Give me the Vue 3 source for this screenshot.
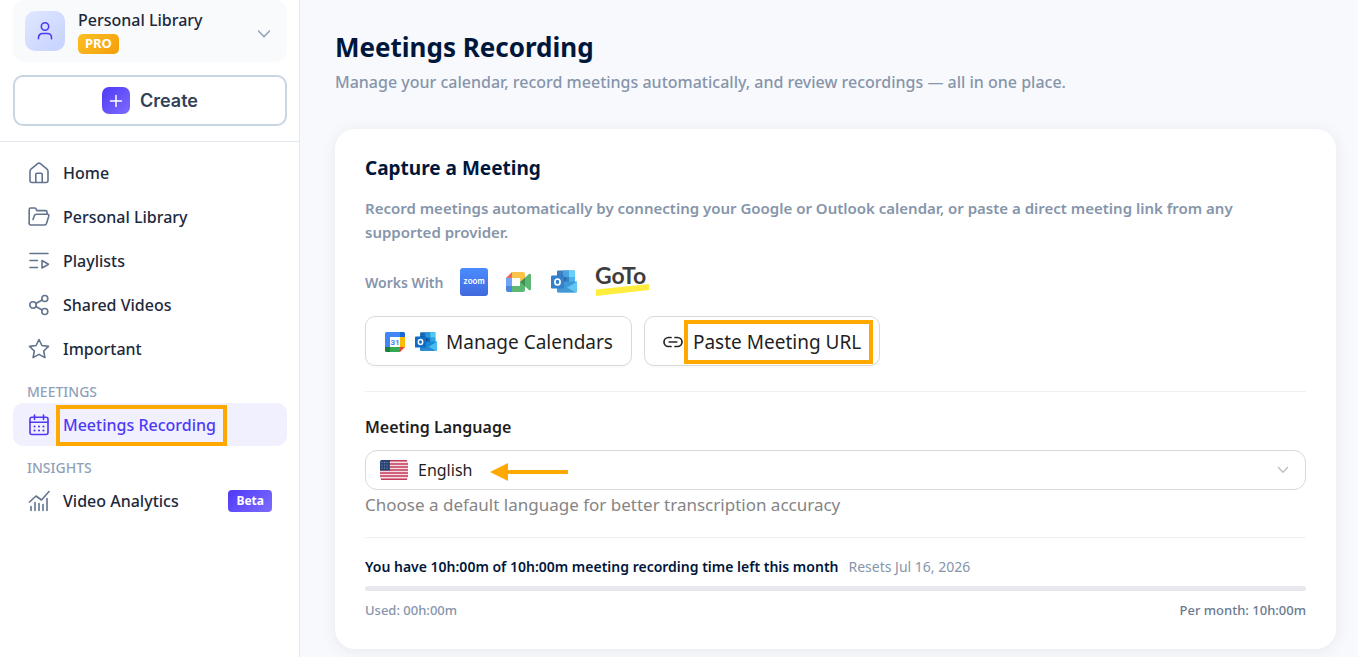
<script setup>
import { ref } from 'vue'

const mainLinks = [
  { label: 'Home', icon: 'home' },
  { label: 'Personal Library', icon: 'folder' },
  { label: 'Playlists', icon: 'playlist' },
  { label: 'Shared Videos', icon: 'share' },
  { label: 'Important', icon: 'star' },
]
const language = ref('English')
const used = ref(0)
</script>

<template>
  <div class="layout">
    <svg class="defs" aria-hidden="true">
      <symbol id="outlook" viewBox="0 0 28 26">
        <path d="M8 1.500h16q1 0 1 1V14H7V2.500q0-1 1-1z" fill="#1769b8" />
        <path d="M7 6h9v6H7z" fill="#0b5296" />
        <path d="M13 1.500h6V8h-6z" fill="#2a94df" />
        <path d="M19 1.500h5q1 0 1 1V8h-6z" fill="#50caf5" />
        <path d="M19 8h6v6h-6z" fill="#2aa4e8" />
        <path d="M7 13l20-.500V22q0 1.500-1.500 1.500H8.500Q7 23.500 7 22z" fill="#1a87d4" />
        <path d="M27 12.500V22q0 1.500-1.500 1.500H9l18-11z" fill="#45bdf0" />
        <path d="M7 13l18.500 10.300H8.500Q7 23.300 7 22z" fill="#2587cf" />
        <rect x="1" y="6.500" width="13" height="13" rx="1" fill="#0f6cc4" />
        <ellipse cx="7.500" cy="13" rx="2.600" ry="3" fill="none" stroke="#fff" stroke-width="1.700" />
      </symbol>
    </svg>

    <aside class="sidebar">
      <div class="top">
        <button class="profile" type="button">
          <span class="avatar">
            <svg width="20" height="20" viewBox="0 0 20 20" fill="none" stroke="#4f39f6" stroke-width="1.600" stroke-linecap="round" stroke-linejoin="round">
              <circle cx="10" cy="5.500" r="3.700" />
              <path d="M3.500 17.700v-1.200a4 4 0 0 1 4-4h5a4 4 0 0 1 4 4v1.200" />
            </svg>
          </span>
          <span class="who">
            <span class="name">Personal Library</span>
            <span class="pro">PRO</span>
          </span>
          <svg class="expand" width="14" height="10" viewBox="0 0 14 10" fill="none" stroke="#90a1b9" stroke-width="1.500" stroke-linecap="round" stroke-linejoin="round">
            <path d="M1.500 2L7 7.700 12.500 2" />
          </svg>
        </button>
        <button class="create" type="button">
          <span class="plus">
            <svg width="14" height="14" viewBox="0 0 14 14" stroke="#fff" stroke-width="1.500" stroke-linecap="round">
              <path d="M7 1.500v11M1.500 7h11" />
            </svg>
          </span>
          Create
        </button>
      </div>

      <nav class="nav">
        <a v-for="link in mainLinks" :key="link.label" href="#" class="item">
          <svg class="icon" viewBox="0 0 22 22">
            <g v-if="link.icon === 'home'">
              <path d="M2 9.300Q2 8 3 7.200L9.600 1.700q1.400-1.100 2.800 0L19 7.200q1 .8 1 2.100V18.500a2 2 0 0 1-2 2H4a2 2 0 0 1-2-2z" />
              <path d="M7.800 20.300v-8q0-1 1-1h4.400q1 0 1 1v8" />
            </g>
            <g v-else-if="link.icon === 'folder'">
              <path d="M1.200 17.500V3.500q0-1.500 1.500-1.500h4q.8 0 1.200.7l1 1.900h8.600q1.500 0 1.500 1.500v1.900" />
              <path d="M1.200 17.500q0 1.500 1.500 1.500h14q1.300 0 1.700-1.200l2.300-7.400q.6-2.100-1.400-2.200H8.500q-1.500 0-2.100 1.400L5 13.500" />
            </g>
            <g v-else-if="link.icon === 'playlist'">
              <path d="M2 3.500h18M2 10.500h7.500M2 17.500h7.500M14 10.500v7.500l6.500-3.700z" />
            </g>
            <g v-else-if="link.icon === 'share'">
              <circle cx="16.800" cy="4.500" r="3" />
              <circle cx="5" cy="11" r="3.200" />
              <circle cx="16.800" cy="17.500" r="3" />
              <path d="M7.900 9.500l6.200-3.500M7.900 12.500l6.200 3.500" />
            </g>
            <path v-else d="M11 1.500l2.900 6 6.600.9-4.800 4.600 1.200 6.600L11 16.400l-5.900 3.200L6.300 13 1.500 8.400l6.600-.9z" />
          </svg>
          {{ link.label }}
        </a>

        <h2 class="group">MEETINGS</h2>
        <a href="#" class="item active" aria-current="page">
          <svg class="icon" viewBox="0 0 22 22">
            <rect x="2" y="3.200" width="18" height="17.300" rx="2" />
            <path d="M6.500 1v4.500M15.500 1v4.500M2 8.300h18" />
            <path d="M6.500 12.500h.1M10.950 12.500h.1M15.400 12.500h.1M6.500 16.500h.1M10.950 16.500h.1M15.400 16.500h.1" stroke-width="2" />
          </svg>
          <span class="mark">Meetings Recording</span>
        </a>

        <h2 class="group">INSIGHTS</h2>
        <a href="#" class="item">
          <svg class="icon" viewBox="0 0 22 22">
            <path d="M1.500 12L8 6l5.500 4L21 1.500M3 20.500v-4M7 20.500v-8M11 20.500v-7M15 20.500v-6M19 20.500v-12" />
          </svg>
          Video Analytics
          <span class="beta">Beta</span>
        </a>
      </nav>
    </aside>

    <main class="main">
      <h1>Meetings Recording</h1>
      <p class="lead">Manage your calendar, record meetings automatically, and review recordings — all in one place.</p>

      <section class="card">
        <h2>Capture a Meeting</h2>
        <p class="about">Record meetings automatically by connecting your Google or Outlook calendar, or paste a direct meeting link from any supported provider.</p>

        <div class="works">
          <span>Works With</span>
          <svg width="28" height="28" viewBox="0 0 28 28" role="img" aria-label="Zoom">
            <defs>
              <linearGradient id="zoomFill" x2="0" y2="1">
                <stop stop-color="#4a8cff" />
                <stop offset="1" stop-color="#4169de" />
              </linearGradient>
            </defs>
            <rect width="28" height="28" rx="3" fill="url(#zoomFill)" />
            <text x="14" y="16" text-anchor="middle" class="zoom-word">zoom</text>
          </svg>
          <svg class="soft" width="28" height="28" viewBox="0 0 28 28" role="img" aria-label="Google Meet">
            <path d="M1 10l6-6v6z" fill="#ea4d42" />
            <path d="M7 4h11q2 0 2 2v5l-5 3v-4H7z" fill="#fbb92a" />
            <path d="M1 10h6v8H1z" fill="#5a93f3" />
            <path d="M1 18h6v6H3q-2 0-2-2z" fill="#2f72da" />
            <path d="M7 18h8v-4l5 3v5q0 2-2 2H7z" fill="#3fab5a" />
            <path d="M15 14l9-8q2-1 2 1v14q0 2-2 1z" fill="#3fab5a" />
            <path d="M15 14l5-4v8z" fill="#1d7d3a" />
          </svg>
          <svg class="soft" width="28" height="26" role="img" aria-label="Outlook"><use href="#outlook" /></svg>
          <svg width="56" height="40" viewBox="0 -4 56 40" role="img" aria-label="GoTo">
            <path d="M1 23.500L54 18v6L1 30z" fill="#ffed3d" />
            <text x="0" y="18" class="goto-word">GoTo</text>
          </svg>
        </div>

        <div class="actions">
          <button class="calendars" type="button">
            <svg width="22" height="22" viewBox="0 0 22 22" aria-hidden="true">
              <path d="M2.500 1H16v5H6v10H1V2.500Q1 1 2.500 1z" fill="#4285f4" />
              <path d="M16 1h3.500Q21 1 21 2.500V6h-5z" fill="#1967d2" />
              <path d="M16 6h5v10h-5z" fill="#fbbc04" />
              <path d="M6 16h10v5H6z" fill="#34a853" />
              <path d="M1 16h5v5H2.500Q1 21 1 19.500z" fill="#188038" />
              <path d="M16 16h5l-5 5z" fill="#ea4335" />
              <path d="M6 6h10v10H6z" fill="#fff" />
              <text x="11" y="14" text-anchor="middle" class="day">31</text>
            </svg>
            <svg width="24" height="22" aria-hidden="true"><use href="#outlook" /></svg>
            <span>Manage Calendars</span>
          </button>
          <button type="button">
            <svg width="20" height="12" viewBox="0 0 20 12" fill="none" stroke="#262626" stroke-width="1.700" stroke-linecap="round">
              <path d="M8 1.500H5.500a4.500 4.500 0 0 0 0 9H8M12 1.500h2.500a4.500 4.500 0 0 1 0 9H12M6.300 6h7.400" />
            </svg>
            <span class="mark wide">Paste Meeting URL</span>
          </button>
        </div>

        <div class="language">
          <label for="language">Meeting Language</label>
          <div class="field">
            <svg width="28" height="20" viewBox="0 0 28 20" aria-hidden="true">
              <rect width="28" height="20" rx="2" fill="#f3dfe3" />
              <path d="M1 .8h26M0 4h28M0 7h28M0 10h28M0 13h28M0 16h28M1 19.200h26" stroke="#c63a59" stroke-width="1.600" />
              <path d="M2 0h8v10.500H0V2q0-2 2-2z" fill="#274472" />
              <path d="M1.500 2.500h8M1.500 5.200h8M1.500 8h8" stroke="#8296b8" stroke-width="1" stroke-dasharray="1 1.500" />
            </svg>
            <select id="language" v-model="language">
              <option>English</option>
            </select>
            <svg width="12" height="8" viewBox="0 0 12 8" fill="none" stroke="#bfbfbf" stroke-width="1.400">
              <path d="M1 1l5 5.200L11 1" />
            </svg>
            <svg class="arrow" width="80" height="20" viewBox="0 0 80 20" aria-hidden="true">
              <path d="M1 10L19 1v7h60v4H19v7z" fill="#ffa800" />
            </svg>
          </div>
          <p>Choose a default language for better transcription accuracy</p>
        </div>

        <div class="usage">
          <p class="left"><strong>You have 10h:00m of 10h:00m meeting recording time left this month</strong><span>Resets Jul 16, 2026</span></p>
          <div class="track"><div class="fill" :style="{ width: used + '%' }"></div></div>
          <div class="totals"><span>Used: 00h:00m</span><span class="month">Per month: 10h:00m</span></div>
        </div>
      </section>
    </main>
  </div>
</template>

<style>
body {
  background: #f8f9fd;
}
</style>

<style scoped>
.layout {
  display: flex;
  min-height: 100vh;
  font-family: "Noto Sans", "Open Sans", sans-serif;
  color: #1d293d;
  overflow: hidden;
}
.layout * {
  box-sizing: border-box;
}
.defs {
  position: absolute;
  width: 0;
  height: 0;
}
h1, h2, p {
  margin: 0;
}
button, select {
  font: inherit;
  color: inherit;
}
svg {
  flex: none;
}
.sidebar {
  flex: none;
  width: 300px;
  background: #fff;
  border-right: 1px solid #e2e8f0;
}
.top {
  padding: 0 12px 15px 13px;
  border-bottom: 1px solid #e2e8f0;
}
.profile {
  display: flex;
  align-items: center;
  width: 100%;
  height: 62px;
  padding: 0 16px 0 12px;
  border: 0;
  border-radius: 12px;
  background: #f8fafc;
  text-align: left;
}
.avatar {
  display: grid;
  place-items: center;
  width: 40px;
  height: 40px;
  margin-right: 13px;
  border-radius: 10px;
  background: linear-gradient(135deg, #e0e7ff, #c6d2ff);
}
.who {
  display: flex;
  flex: 1;
  flex-direction: column;
  align-items: flex-start;
  gap: 3px;
}
.name {
  font-size: 16px;
  line-height: 22px;
  font-weight: 500;
}
.pro {
  height: 20px;
  padding: 0 7px;
  border-radius: 5px;
  background: linear-gradient(135deg, #fbbf24, #f59e0b);
  color: #fff;
  font-size: 13px;
  line-height: 19px;
  font-weight: 700;
}
.expand {
  margin-top: 5px;
}
.create {
  display: flex;
  align-items: center;
  justify-content: center;
  gap: 10px;
  width: 100%;
  height: 51px;
  margin-top: 13px;
  border: 2px solid #cad5e2;
  border-radius: 10px;
  background: #fff;
  color: #314158;
  font-family: Inter, sans-serif;
  font-size: 18px;
  font-weight: 600;
}
.plus {
  display: grid;
  place-items: center;
  width: 28px;
  height: 27px;
  border-radius: 7px;
  background: linear-gradient(135deg, #4f39f6, #7c6cff);
}
.nav {
  display: flex;
  flex-direction: column;
  gap: 1px;
  padding: 9px 12px 0 13px;
}
.item {
  display: flex;
  align-items: center;
  gap: 13px;
  height: 43px;
  padding: 0 15px;
  border-radius: 10px;
  color: #1d293d;
  font-size: 16px;
  font-weight: 500;
  text-decoration: none;
  white-space: nowrap;
}
.icon {
  width: 22px;
  height: 22px;
  fill: none;
  stroke: #62748e;
  stroke-width: 1.600;
  stroke-linecap: round;
  stroke-linejoin: round;
}
.active {
  background: #f1f0ff;
  color: #4f39f6;
}
.active .icon {
  stroke: #4f39f6;
}
.group {
  margin: 11px 0 0 14px;
  color: #90a1b9;
  font-size: 14px;
  line-height: 20px;
  font-weight: 500;
}
.beta {
  margin-left: auto;
  padding: 0 8px;
  border-radius: 4px;
  background: linear-gradient(135deg, #4f39f6, #7c6cff);
  color: #fff;
  font-size: 12px;
  line-height: 22px;
  font-weight: 700;
}
.mark {
  position: relative;
}
.mark::after {
  content: "";
  position: absolute;
  inset: -9px -11px -10px -7px;
  border: 4px solid #ffa800;
}
.mark.wide::after {
  inset: -8px -12px -8px -9px;
}
.main {
  flex: 1;
  min-width: 0;
  padding: 27px 22px 8px 35px;
}
h1 {
  color: #00173c;
  font-size: 26px;
  line-height: 40px;
  font-weight: 700;
}
.lead {
  margin-top: 3px;
  color: #8695aa;
  font-size: 16px;
  line-height: 24px;
  font-weight: 500;
}
.card {
  margin-top: 35px;
  padding: 24px 30px 27px;
  border-radius: 20px;
  background: #fff;
  box-shadow: 0 2px 16px rgba(15, 23, 60, 0.07);
}
.card h2 {
  color: #00173c;
  font-size: 19px;
  line-height: 30px;
  font-weight: 700;
}
.about {
  margin-top: 13px;
  color: #8695aa;
  font-size: 15px;
  line-height: 24px;
  font-weight: 600;
}
.works {
  display: flex;
  align-items: center;
  gap: 17px;
  height: 32px;
  margin-top: 22px;
  color: #8695aa;
  font-size: 14px;
  font-weight: 600;
}
.soft {
  opacity: 0.85;
}
.zoom-word {
  fill: #fff;
  font: 600 8px Inter, sans-serif;
}
.goto-word {
  fill: #3d3d3d;
  font: 700 23px Lato, sans-serif;
}
.day {
  fill: #4285f4;
  font: 700 8px Roboto, sans-serif;
}
.actions {
  display: flex;
  gap: 12px;
  margin-top: 18px;
}
.actions button {
  display: flex;
  align-items: center;
  gap: 10px;
  height: 50px;
  padding: 1px 18px 0;
  border: 1px solid #d9d9d9;
  border-radius: 10px;
  background: #fff;
  box-shadow: 0 2px 0 rgba(0, 0, 0, 0.02);
  color: #1f1f1f;
  font-size: 19px;
  line-height: 28px;
  white-space: nowrap;
}
.actions .calendars {
  gap: 8px;
}
.language {
  margin-top: 25px;
  padding-top: 22px;
  border-top: 1px solid #f0f0f0;
}
.language label {
  display: block;
  color: #1f1f1f;
  font-size: 16px;
  line-height: 26px;
  font-weight: 600;
}
.field {
  position: relative;
  display: flex;
  align-items: center;
  gap: 10px;
  height: 40px;
  margin-top: 10px;
  padding: 0 16px 0 14px;
  border: 1px solid #d9d9d9;
  border-radius: 12px;
}
.field select {
  flex: 1;
  padding: 0;
  border: 0;
  background: none;
  appearance: none;
  color: #1f1f1f;
  font-size: 16px;
}
.arrow {
  position: absolute;
  left: 123px;
  top: 11px;
}
.language p {
  margin-top: 3px;
  color: #858585;
  font-size: 17px;
  line-height: 24px;
}
.usage {
  margin-top: 20px;
  padding-top: 17px;
  border-top: 1px solid #f0f0f0;
}
.left {
  color: #00173c;
  font-size: 14px;
  line-height: 24px;
}
.left strong {
  font-weight: 600;
}
.left span {
  margin-left: 10px;
  color: #8695aa;
}
.track {
  height: 5px;
  margin: 7px 0;
  border-radius: 3px;
  background: #e7e7ed;
}
.fill {
  height: 100%;
  border-radius: 3px;
  background: #4f39f6;
}
.totals {
  display: flex;
  justify-content: space-between;
  color: #8695aa;
  font-size: 13px;
  line-height: 24px;
  font-weight: 500;
}
.month {
  color: #6b7a90;
}
</style>
